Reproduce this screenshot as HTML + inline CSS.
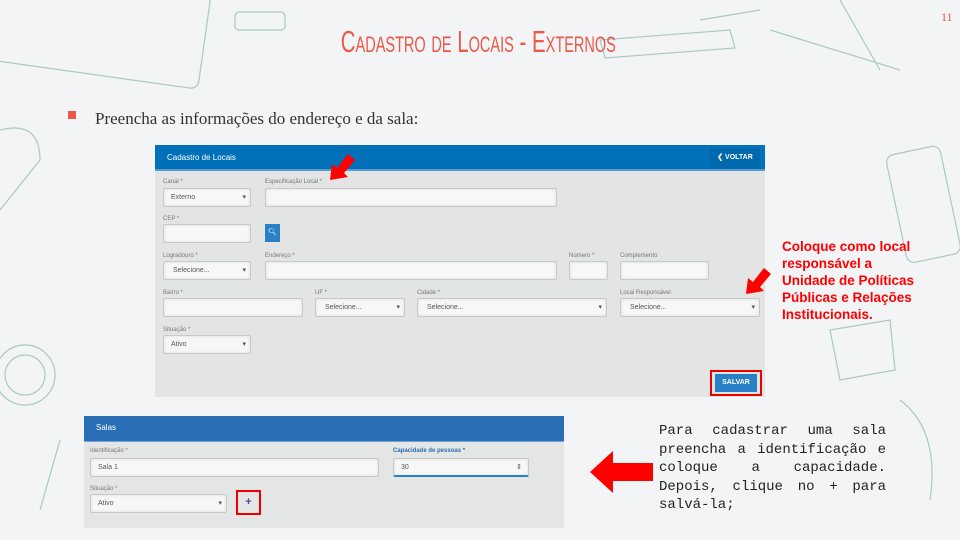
<!DOCTYPE html>
<html><head><meta charset="utf-8"><style>
body{margin:0;width:960px;height:540px;background:#f3f4f6;position:relative;overflow:hidden;font-family:"Liberation Sans",sans-serif}
.a{position:absolute}
.title{left:0;width:960px;top:24px;text-align:center;color:#e8594a;font-family:"Liberation Sans Narrow","Liberation Sans",sans-serif;font-variant:small-caps;font-size:31px;transform:scaleX(0.66);transform-origin:475px 0}
.f{position:absolute;background:#f7f7f7;border:1px solid #c8c8c8;border-radius:2px;box-shadow:inset 0 0 3px #ddd;font-size:7px;color:#555;line-height:17px;padding-left:7px;box-sizing:border-box}
.l{position:absolute;font-size:6px;color:#777}
.sel:after{content:"▾";position:absolute;right:4px;font-size:7px}
.j div{text-align:justify;text-align-last:justify;white-space:nowrap}
.j div:last-child{text-align-last:left}
</style></head><body>
<svg class="a" style="left:0;top:0" width="960" height="540" fill="none" stroke="#a9c9c4" stroke-width="1.2">
<rect x="-10" y="-20" width="215" height="95" rx="8" transform="rotate(8 100 30)"/>
<rect x="235" y="12" width="50" height="18" rx="4"/>
<path d="M600 40 L730 30 L735 48 L605 58 Z M700 20 L760 10 M770 30 L900 70 M840 0 L880 70"/>
<rect x="895" y="150" width="55" height="110" rx="8" transform="rotate(-12 920 200)"/>
<circle cx="25" cy="375" r="30"/><circle cx="25" cy="375" r="20"/>
<path d="M60 440 L40 510 M0 130 Q40 120 40 160 L0 210 M830 330 L890 320 L895 370 L840 380 Z M900 400 Q940 430 930 500"/>
</svg>
<div class="a" style="left:941px;top:10px;color:#e8594a;font-size:12px;font-family:'Liberation Serif',serif">11</div>
<div class="a title">Cadastro de Locais - Externos</div>
<div class="a" style="left:68px;top:111px;width:8px;height:8px;background:#e8594a"></div>
<div class="a" style="left:95px;top:109px;font-family:'Liberation Serif',serif;font-size:17px;color:#333">Preencha as informações do endereço e da sala:</div>

<div class="a" style="left:155px;top:145px;width:610px;height:252px;background:#e3e4e4">
 <div class="a" style="left:0;top:0;width:610px;height:26px;background:#0070b8;border-bottom:2px solid #5a9bd0;color:#fff;font-size:8px;line-height:26px;padding-left:12px;box-sizing:border-box">Cadastro de Locais</div>
 <div class="a" style="left:555px;top:3px;width:50px;height:20px;background:#0068ad;color:#fff;font-size:7px;line-height:20px;text-align:center;font-weight:bold">❮ VOLTAR</div>
 <div class="l" style="left:8px;top:34px">Canal *</div><div class="l" style="left:110px;top:34px">Especificação Local *</div>
 <div class="f sel" style="left:8px;top:43px;width:88px;height:19px">Externo</div>
 <div class="f" style="left:110px;top:43px;width:292px;height:19px"></div>
 <div class="l" style="left:8px;top:71px">CEP *</div>
 <div class="f" style="left:8px;top:79px;width:88px;height:19px"></div>
 <div class="a" style="left:110px;top:79px;width:15px;height:18px;background:#2a80c4;color:#fff;font-size:7px;text-align:center;line-height:18px">🔍︎</div>
 <div class="l" style="left:8px;top:108px">Logradouro *</div><div class="l" style="left:110px;top:108px">Endereço *</div><div class="l" style="left:414px;top:108px">Número *</div><div class="l" style="left:465px;top:108px">Complemento</div>
 <div class="f sel" style="left:8px;top:116px;width:88px;height:19px;padding-left:9px">Selecione...</div>
 <div class="f" style="left:110px;top:116px;width:292px;height:19px"></div>
 <div class="f" style="left:414px;top:116px;width:39px;height:19px"></div>
 <div class="f" style="left:465px;top:116px;width:89px;height:19px"></div>
 <div class="l" style="left:8px;top:145px">Bairro *</div><div class="l" style="left:160px;top:145px">UF *</div><div class="l" style="left:262px;top:145px">Cidade *</div><div class="l" style="left:465px;top:145px">Local Responsável</div>
 <div class="f" style="left:8px;top:153px;width:140px;height:19px"></div>
 <div class="f sel" style="left:160px;top:153px;width:90px;height:19px;padding-left:9px">Selecione...</div>
 <div class="f sel" style="left:262px;top:153px;width:190px;height:19px;padding-left:9px">Selecione...</div>
 <div class="f sel" style="left:465px;top:153px;width:140px;height:19px;padding-left:9px">Selecione...</div>
 <div class="l" style="left:8px;top:182px">Situação *</div>
 <div class="f sel" style="left:8px;top:190px;width:88px;height:19px">Ativo</div>
 <div class="a" style="left:555px;top:225px;width:52px;height:26px;border:2px solid #e00;box-sizing:border-box"></div>
 <div class="a" style="left:560px;top:229px;width:42px;height:18px;background:#2a80c4;color:#fff;font-size:7px;font-weight:bold;line-height:18px;text-align:center">SALVAR</div>
</div>
<svg class="a" style="left:328px;top:150px" width="30" height="35"><path d="M2 30 L4 14 L9 18 L20 4 L27 10 L16 23 L20 27 Z" fill="#f00"/></svg>
<svg class="a" style="left:744px;top:262px" width="30" height="35"><path d="M2 32 L4 16 L9 20 L20 6 L27 12 L16 25 L20 29 Z" fill="#f00"/></svg>
<div class="a" style="left:782px;top:238px;color:#f00;font-weight:bold;font-size:13.5px;line-height:17px">Coloque como local<br>responsável a<br>Unidade de Políticas<br>Públicas e Relações<br>Institucionais.</div>

<div class="a" style="left:84px;top:416px;width:480px;height:112px;background:#e4e5e5">
 <div class="a" style="left:0;top:0;width:480px;height:26px;background:#2a6fb5;border-bottom:1px solid #6ea3d5;color:#fff;font-size:8px;line-height:24px;padding-left:12px;box-sizing:border-box">Salas</div>
 <div class="l" style="left:6px;top:32px">Identificação *</div>
 <div class="l" style="left:309px;top:32px;color:#2a6fb5;font-weight:bold">Capacidade de pessoas *</div>
 <div class="f" style="left:6px;top:42px;width:289px;height:19px">Sala 1</div>
 <div class="f" style="left:309px;top:42px;width:136px;height:19px;border-bottom:2px solid #2a80c4">30<span style="position:absolute;right:6px">⇕</span></div>
 <div class="l" style="left:6px;top:70px">Situação *</div>
 <div class="f sel" style="left:6px;top:78px;width:137px;height:19px">Ativo</div>
 <div class="a" style="left:152px;top:74px;width:25px;height:25px;border:2px solid #e00;box-sizing:border-box;color:#4a4aa0;font-weight:bold;font-size:11px;text-align:center;line-height:21px">+</div>
</div>
<svg class="a" style="left:589px;top:450px" width="65" height="45"><path d="M1 22 L24 1 L24 13 L64 13 L64 31 L24 31 L24 43 Z" fill="#f00"/></svg>
<div class="a j" style="left:659px;top:422px;width:227px;font-family:'Liberation Mono',monospace;font-size:14px;line-height:18.5px;color:#222">
<div>Para cadastrar uma sala</div><div>preencha a identificação e</div><div>coloque a capacidade.</div><div>Depois, clique no + para</div><div>salvá-la;</div></div>
</body></html>
